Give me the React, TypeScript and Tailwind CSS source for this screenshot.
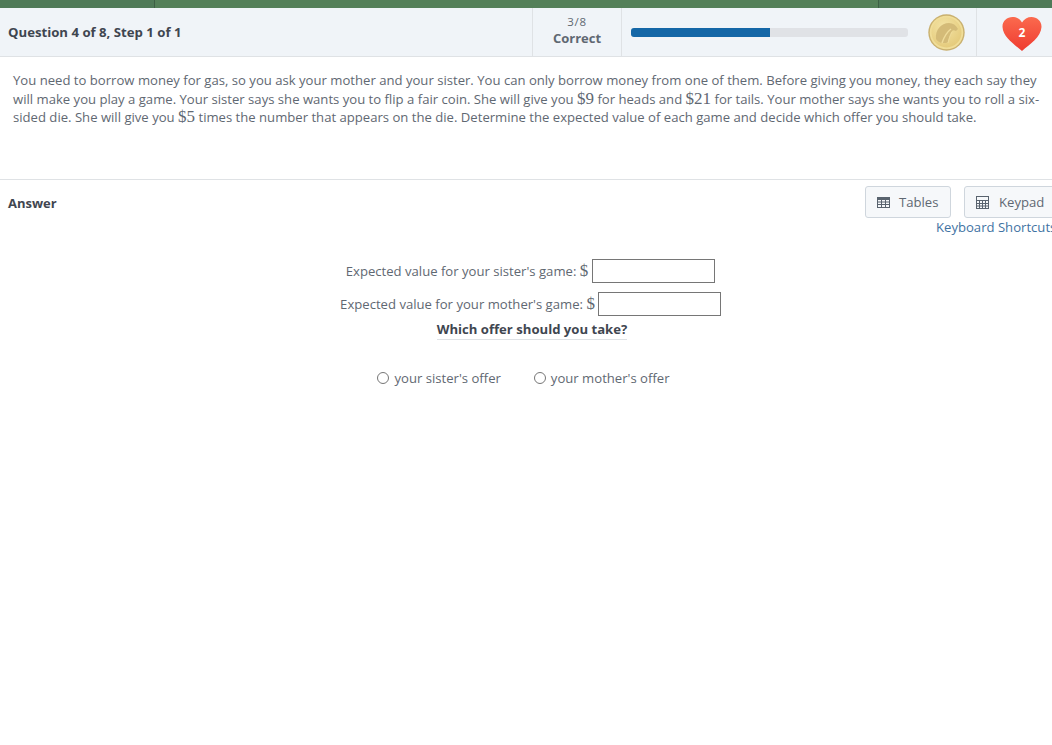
const Serif = ({ children }: { children: string }) => (
  <span className="font-['Liberation_Serif',serif] text-[17px] leading-none">{children}</span>
);

const Coin = () => (
  <svg width="37" height="37" viewBox="0 0 37 37">
    <defs>
      <radialGradient id="coin" cx="0.4" cy="0.3" r="0.8">
        <stop offset="0" stopColor="#f3e3a4" />
        <stop offset="1" stopColor="#e3c877" />
      </radialGradient>
    </defs>
    <circle cx="18.5" cy="18.5" r="18.2" fill="#c9b06f" />
    <circle cx="18.5" cy="18.5" r="16.800" fill="#f0dd98" />
    <circle cx="18.5" cy="18.5" r="15" fill="url(#coin)" />
    <path d="M8 25C7 16 13 9 21 9c4 0 7 2 9 6l-2 2c-2-1-3-1-4 0-2 3-3 7-4 11-1 1-3 1-5 1-3 0-6-2-7-4z" fill="#d4bb78" />
    <path d="M14 29c2-6 5-11 9-14" stroke="#efdc9b" strokeWidth="1.500" fill="none" />
    <path d="M20 29c1-4 2-8 4-11" stroke="#efdc9b" strokeWidth="1" fill="none" />
  </svg>
);

const Heart = () => (
  <div className="relative w-[40px] h-[36px]">
    <svg width="40" height="36" viewBox="0 0 40 36">
      <defs>
        <linearGradient id="heart" x1="0" y1="0" x2="0" y2="1">
          <stop offset="0" stopColor="#fb6a4e" />
          <stop offset="1" stopColor="#ef3b30" />
        </linearGradient>
      </defs>
      <path d="M20 35C12 28 1 21 .5 11 .3 5 5 1 10.500 1c4 0 7.500 2 9.500 5.500C22 3 25.500 1 29.500 1 35 1 39.700 5 39.500 11 39 21 28 28 20 35z" fill="url(#heart)" />
    </svg>
    <span className="absolute inset-0 flex items-center justify-center pb-[2px] text-[12px] font-bold text-white">2</span>
  </div>
);

const TableIcon = () => (
  <svg width="13" height="11" viewBox="0 0 13 11" fill="none" stroke="#59636e" strokeWidth="1">
    <rect x=".5" y=".5" width="12" height="10" />
    <path d="M.5 2h12" strokeWidth="2" />
    <path d="M.5 5h12M.5 7.500h12M4.500 .5v10M8.500 .5v10" />
  </svg>
);

const KeypadIcon = () => (
  <svg width="13" height="13" viewBox="0 0 13 13" fill="none" stroke="#59636e" strokeWidth="1">
    <rect x=".5" y=".5" width="12" height="12" />
    <path d="M.5 4.500h12M.5 7.500h12M.5 10h12M3.500 4.500v8M6.500 4.500v8M9.500 4.500v8" />
  </svg>
);

const Radio = ({ label }: { label: string }) => (
  <label className="flex items-center gap-[5px]">
    <span className="w-[12px] h-[12px] rounded-full border border-[#767676] bg-white" />
    <span>{label}</span>
  </label>
);

export default function App() {
  return (
    <div className="w-[1052px] h-[745px] overflow-hidden bg-white font-['Open_Sans',sans-serif] text-[13.120px] text-[#5f6872]">
      <div className="flex h-[8px] bg-[#548059]">
        <div className="w-[155px] bg-[#4f7a58] border-r border-[#3d5f45]" />
        <div className="w-[724px] border-r border-[#3d5f45]" />
        <div className="flex-1 bg-[#4f7a58]" />
      </div>

      <div className="flex h-[49px] bg-[#f0f4f8] border-b border-[#dfe2e5]">
        <div className="w-[532px] pl-2 pt-[2px] flex items-center font-bold text-[#3f4650] text-[13.180px]">
          Question 4 of 8, Step 1 of 1
        </div>
        <div className="w-[90px] pb-[3px] border-x border-[#dfe2e5] flex flex-col items-center justify-center">
          <span className="text-[11.500px] leading-[16px] tracking-[0.7px]">3/8</span>
          <span className="font-bold leading-[17px] text-[13px]">Correct</span>
        </div>
        <div className="w-[354px] pl-[9px] flex items-center">
          <div className="w-[277px] h-[9px] rounded-[3px] bg-[#e0e2e6] overflow-hidden">
            <div className="w-[139px] h-full bg-[#1467a7]" />
          </div>
          <div className="ml-[20px] mt-[1px]">
            <Coin />
          </div>
        </div>
        <div className="flex-1 border-l border-[#dfe2e5] pl-[25px] pt-[3px] flex items-center">
          <Heart />
        </div>
      </div>

      <div className="h-[123px] border-b border-[#dfe2e5] pl-[13px] pr-[10px] pt-[14px] leading-[18.600px]">
        <p className="w-[1029px]">
          You need to borrow money for gas, so you ask your mother and your sister. You can only borrow money from one of them. Before giving you money, they each say they will make you play a game. Your sister says she wants you to flip a fair coin. She will give you <Serif>$9</Serif> for heads and <Serif>$21</Serif> for tails. Your mother says she wants you to roll a six-sided die. She will give you <Serif>$5</Serif> times the number that appears on the die. Determine the expected value of each game and decide which offer you should take.
        </p>
      </div>

      <div className="flex justify-between pl-2 h-[61px]">
        <div className="pt-[15px] font-bold text-[#3f4650] text-[13px] leading-[17px]">Answer</div>
        <div className="w-[187px] shrink-0 pt-[6px] overflow-hidden">
          <div className="flex gap-[13px] whitespace-nowrap">
            <button className="flex items-center gap-[9px] w-[86px] h-[32px] shrink-0 pl-[11px] pt-[1px] rounded-[3px] border border-[#cfd6dd] bg-[#f6f8fa]">
              <TableIcon />
              Tables
            </button>
            <button className="flex items-center gap-[10px] w-[100px] h-[32px] shrink-0 pl-[11px] pt-[1px] rounded-[3px] border border-[#cfd6dd] bg-[#f6f8fa]">
              <KeypadIcon />
              Keypad
            </button>
          </div>
          <div className="ml-[71px] whitespace-nowrap text-[#3f73a3] leading-[18px]">Keyboard Shortcuts</div>
        </div>
      </div>

      <div className="flex flex-col items-center pt-[18px]">
        <div className="flex items-center h-[24px] gap-[4px] ml-[9px]">
          <span className="pt-[2px]">Expected value for your sister's game: <Serif>$</Serif></span>
          <span className="w-[123px] h-[24px] border border-[#767676] bg-white" />
        </div>
        <div className="flex items-center h-[24px] gap-[3px] mt-[9px] ml-[-1px] mr-[-10px]">
          <span className="pt-[2px]">Expected value for your mother's game: <Serif>$</Serif></span>
          <span className="w-[123px] h-[24px] border border-[#767676] bg-white" />
        </div>
        <div className="mt-[4px] h-[20px] border-b border-[#dfe2e5] font-bold text-[#3f4650] leading-[18px] ml-[12px] text-[13.130px]">
          Which offer should you take?
        </div>
        <div className="flex gap-[33px] mt-[29px] leading-[18px] ml-[-5px]">
          <Radio label="your sister's offer" />
          <Radio label="your mother's offer" />
        </div>
      </div>
    </div>
  );
}
